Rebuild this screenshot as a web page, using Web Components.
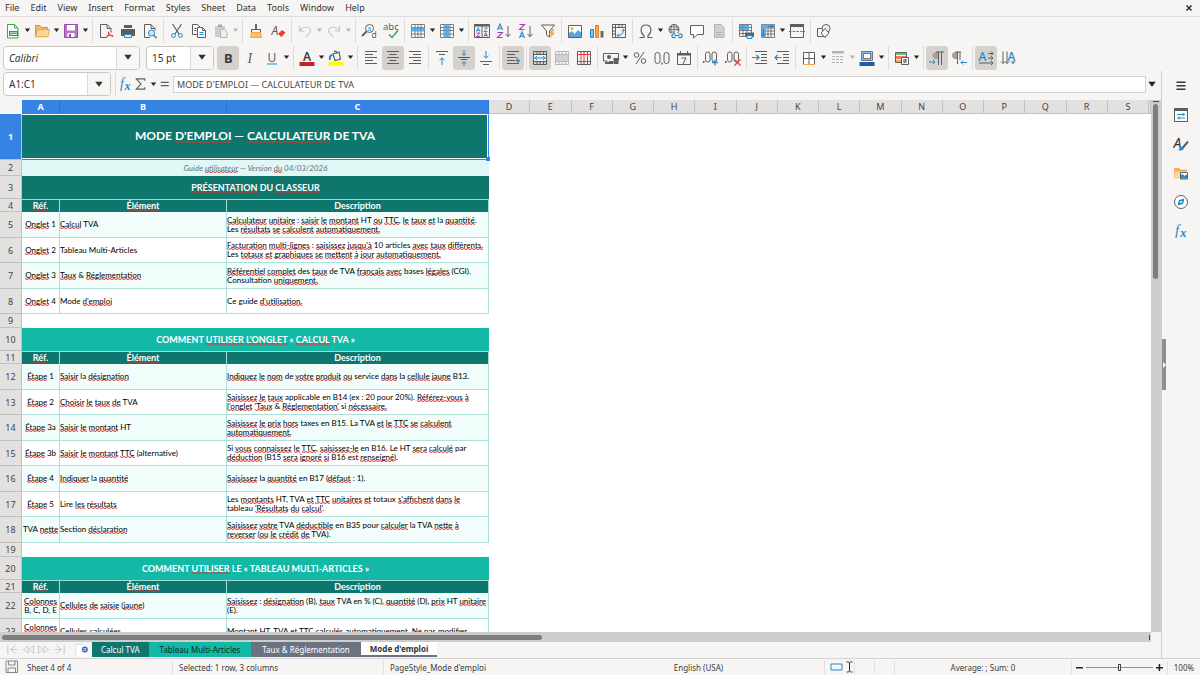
<!DOCTYPE html>
<html lang="fr">
<head>
<meta charset="utf-8">
<title>Calculateur de TVA</title>
<style>
html,body{margin:0;height:100%}
body{font:9px/12px "Noto Sans",sans-serif;color:#3c3c3c;background:#f6f5f4;overflow:hidden}
</style>
</head>
<body>
<calc-app></calc-app>
<script>
const K='#5e5e5e',B='#1e8bcd',R='#ed3d3b',O='#f8a64a';
const line=(d,c=K,w=1)=>`<path d="${d}" fill="none" stroke="${c}" stroke-width="${w}"/>`;
const fill=(d,c=K)=>`<path d="${d}" fill="${c}"/>`;
const glyph=(t,x,y,s,c=K,x2='')=>`<text x="${x}" y="${y}" font-size="${s}" fill="${c}" ${x2}>${t}</text>`;
const grid=fill('M1 1h14v14H1z','#fff')+line('M1.500 1.500h13v13h-13zM1.500 4.500h13M1.500 7.500h13M1.500 11h13M5 1.500v13M8 1.500v13M11 1.500v13',K,.8);
/* every drawing lives on a 16 unit square */
const ICONS={
 new:fill('M2.5 1.5h7l3.5 3.500v10H2.500z','#fff')+line('M2.500 15V1.500h7l3.500 3.500v10zM9.500 1.500V5H13','#3fa64b')+fill('M4 8h9v5H4z','#2f9c3f')+line('M5 9.800h7M5 11.500h7','#fff',.8),
 open:fill('M1 13.500v-11h5l1.500 2h6.500v2','#f3b965')+line('M1.500 13.500v-11h4.500l1.500 2h6v2','#d9933a')+fill('M1.500 13.700l2-7.200h12l-1.700 7.200z','#fdd59a')+line('M1.500 13.700l2-7.200h12l-1.700 7.200z','#e8a548'),
 save:fill('M1 1.500h14v13H1z','#b974cb')+line('M1.500 1.500h13v13h-13z','#9a4bb0')+fill('M4 2h8v5.500H4zM4.500 10h7v4h-7z','#fff')+fill('M6 11h2v3H6z','#9a4bb0'),
 pdf:line('M2.500 1.500h6.500l4 4v4M2.500 1.500v13h6M9 1.500v4h4')+line('M8 14.500c2-1 3-3.500 2.700-6M10.500 9.500c1 3 2 3.800 5 3.700M8.500 14c2-2 4-2 6.500-1.500','#e0322f'),
 print:fill('M1 6h14v7h-3v-2H4v2H1z')+fill('M4 2h8v3H4z')+line('M4.500 11.500h7v3h-7z',B)+fill('M5 12h6v2H5z','#d9f0fc'),
 preview:line('M8 14.500H2.500v-13H9l4 4v2M9 1.500v4h4')+'<circle cx="9.500" cy="10" r="3" fill="#cfe8f8" stroke="#1e8bcd"/>'+line('M11.700 12.200l3 3',B,1.500),
 cut:line('M3.500 1l6.500 10M12.500 1L6 11',K,1.200)+'<circle cx="4.500" cy="12.500" r="2" fill="none" stroke="#1e8bcd"/><circle cx="11.500" cy="12.500" r="2" fill="none" stroke="#1e8bcd"/>',
 copy:line('M6 11.500H1.500v-10h5l3 3M3.500 5.500h2M3.500 7.500h2')+fill('M6.500 4.500h5l3 3v7h-8z','#fff')+line('M6.500 4.500h5l3 3v7h-8zM11.500 4.500v3h3')+line('M8.500 9.500h4M8.500 11.500h4',B),
 paste:fill('M2 3h10v11H2z','#cfcdcb')+fill('M5 1.500h4V4H5z','#a9a7a5')+fill('M7 6h7v9H7z','#f0efee')+line('M7.500 6.500h4l2.500 2.500v5.500H7.500z','#b5b3b1'),
 brush:fill('M7 1h2v5H7z','#6b6b6b')+line('M3.500 9.500v-3h9v3')+fill('M4 9h8.500l1.500 5.500H2z','#fbbd72')+line('M2.500 14.500l1-5h9l1 5z',O),
 clear:glyph('A',1.500,12,12,K,'font-style="italic"')+fill('M8 11l4-4 3.500 2.500-4 4.500z',R),
 undo:line('M2.500 3v5h5M2.500 8c3-5 11-5 11 0 0 3-3 4-5 6','#c9c7c5',1.200),
 redo:line('M13.500 3v5h-5M13.500 8c-3-5-11-5-11 0 0 3 3 4 5 6','#c9c7c5',1.200),
 find:'<circle cx="8.500" cy="5.500" r="4" fill="#fff" stroke="#5e5e5e"/>'+line('M5.500 8.500L1 13',K,1.800)+glyph('a',6.200,8,7,B)+glyph('d',10.500,15,8.500,K),
 spell:glyph('abc',0,7,9.500,K)+line('M6 11.500l3 3 6-7','#35a854',1.500),
 row:grid+fill('M1.500 4.500h13v4h-13z','#5fb0ea')+line('M5 4.500v4M8 4.500v4M11 4.500v4','#3a8fd0',.6),
 col:grid+fill('M5.500 1.500h4.500v13H5.500z','#5fb0ea')+line('M5.500 4.500h4.500M5.500 7.500h4.500M5.500 11h4.500','#3a8fd0',.6),
 sort:line('M.5 1.500h15v13H.5zM8 3v11.500')+fill('M.5 1h15v2.500H.5z')+line('M2.500 8.500l1.700-4 1.700 4M3 7.500h2.500M10 4.800h3.500L10 8.500h3.500',B,.9)+line('M2.500 10h3.500l-3.500 3.500H6','#8e3fa3',.9)+line('M10 13.500l1.700-4 1.700 4M10.500 12.500h2.500','#8e3fa3',.9),
 az:line('M1.500 7L4 1l2.500 6M2.300 5.200h3.400',B,1.100)+line('M1.500 9.500h5l-5 5h5','#a33fb0',1.100)+line('M12 3v10.500M9.500 11l2.500 2.700 2.500-2.700'),
 za:line('M1.500 1.500h5l-5 5h5','#a33fb0',1.100)+line('M1.500 15L4 9l2.500 6M2.300 13.200h3.400',B,1.100)+line('M12 3v10.500M9.500 11l2.500 2.700 2.500-2.700'),
 filter:line('M1.500 2h13L9.500 8v6l-3-2V8z')+fill('M12 6l-3 5h2l-1 4.500 5-6h-2.500l2-3.500z',O),
 image:fill('M1.500 2h13v12.500h-13z','#fff')+fill('M2 14v-4l3-2 2.500 3 3.500-4 3.500 3v4z','#5ba5dc')+line('M1.500 2.500h13v12h-13z')+'<circle cx="5" cy="5.500" r="1.500" fill="#f8a64a"/>',
 chart:fill('M1.500 6h3v8.500h-3z','#83beec')+line('M1.500 6.500h3v8h-3z',B)+fill('M6.500 2h3v12.500h-3z',O)+line('M6.500 2.500h3v12h-3z','#e08020')+fill('M11.500 8h3v6.500h-3z','#696969'),
 pivot:line('M1.500 1.500h13v13h-13zM1.500 4.500h13M4.500 1.500v13M8 1.500v3M11 1.500v3M1.500 8h3M1.500 11h3')+line('M12.500 6.500c0 4-2 6-6 6M10.700 8l1.800-1.800L14.300 8M8 10.500l-2 2 2 2',B),
 omega:line('M1.500 14.500h4.500v-2C2 10 1.800 2 8 2s6 8 2 10.500v2h4.500',K,1.200),
 globe:'<circle cx="7" cy="6.500" r="5" fill="none" stroke="#5e5e5e"/>'+line('M2 6.500h10M3 4h8M3 9h5M7 1.500v9M5 2c-1.500 3-1.500 6 0 8.500M9 2c1 2 1.500 4 1 6',K,.8)+fill('M4 10h12v6H4z','#f6f5f4')+line('M8.500 10.800H6.800a1.900 1.900 0 000 3.800h1.700M11.500 10.800h1.700a1.900 1.900 0 010 3.800h-1.700M7.500 12.700h5',B,1.200),
 comment:fill('M1.500 2.500h13v9H8L4.500 14.500v-3h-3z','#fff')+line('M1.500 2.500h13v9H8.500L4.500 15v-3.500h-3z'),
 footer:fill('M3 1.500h7l3 3v10H3z','#d3d1cf')+line('M3.500 1.500H10l3 3v10H3.500zM5 9.500h6M5 12h6','#b5b3b1'),
 parea:line('M1.500 1.500h12v12h-12zM1.500 4.500h12M1.500 7.500h12M1.500 10.500h12M5 1.500v12M9 1.500v12',K,.8)+fill('M2 2h9v5H2z','#5fb0ea')+line('M2 4.500h9M5 2v5','#3a8fd0',.6)+fill('M7 9.500h9V14H7z','#4d6c80')+fill('M9 12.500h5v3H9z','#d9f0fc')+line('M9 12.500h5v3H9z',B),
 freeze:line('M1.500 1.500h13v13h-13zM1.500 5h13M5 1.500v13M8 5v9.500M11 5v9.500M5 8h9.500M5 11h9.500',K,.8)+fill('M1.500 1.500h13V5H5v9.500H1.500z','#62aee6')+line('M3.300 6v7M8 3.300h5M11.500 2l1.500 1.300L11.500 4.500M2 11.500l1.300 1.500 1.200-1.500','#1f5fa6',.8),
 split:line('M1.500 1.500h13v13h-13z')+fill('M1 1h14v3H1z')+line('M0 8.500h16',B).replace('/>',' stroke-dasharray="2.500 1.200"/>'),
 shapes:line('M1.500 5.500h8v8h-8z')+'<circle cx="10" cy="5.500" r="4" fill="#f6f5f4" stroke="#5e5e5e"/>'+fill('M8.500 6l4 4-4 4-3.500-4z','#f6f5f4')+line('M9 5.500l4 4.500-4 4.500L5 10z'),
 bold:glyph('B',4,12.500,13,'#3b3b3b','font-weight="700" font-family="Noto Sans"'),
 italic:glyph('I',5.500,12.500,14,K,'font-style="italic" font-family="Liberation Serif"'),
 underline:glyph('U',3.500,11.500,12,K)+fill('M3 13.500h10v1H3z',B),
 fontc:glyph('A',4,10.500,12,'#3b3b3b','font-weight="600"')+fill('M.5 12h15v4H.5z','#c9211e'),
 fillc:line('M5 4l6-2 1.500 7-5.500 1.500zM6 2c1-1.500 3-1 3 2',K,1.200)+line('M4.500 5C2 5 1.500 7 2 10',B,2)+fill('M.5 12h15v4H.5z','#ffff00'),
 left:line('M2 1.500h12M2 4.500h8M2 7.500h12M2 10.500h8M2 13.500h12'),
 center:line('M2 1.500h12M4.500 4.500h7M2 7.500h12M4.500 10.500h7M2 13.500h12'),
 right:line('M2 1.500h12M6 4.500h8M2 7.500h12M6 10.500h8M2 13.500h12'),
 top:line('M2 1.500h12M5 4.500h6')+line('M8 15V8M5.500 10.300L8 7.800l2.500 2.500',B),
 middle:line('M2 7.500h12M5 9.500h6')+line('M8 0v5M6 3.500l2 2 2-2M8 16v-4M6 13.500l2-2 2 2',B),
 bottom:line('M2 11.500h12M5 14.500h6')+line('M8 1v7M5.500 5.700L8 8.200l2.500-2.500',B),
 wrap:line('M2 1.500h12M2 4.500h8M2 7.500h6M2 10.500h8M2 13.500h12')+line('M8 7.500h3c2 0 2 2 2 4M11 10l2 2 2-2',B,1.200),
 merge:line('M1.500 1.500h13v13h-13zM1.500 4.500h13M1.500 11.500h13M5 1.500v3M8 1.500v3M11.500 1.500v3M5 11.500v3M8 11.500v3M11.500 11.500v3')+fill('M2 5h12v6H2z','#e9f5fd')+line('M2.500 8h11M5 6L3 8l2 2M11 6l2 2-2 2',B),
 unmerge:fill('M2 5h12v6H2z','#d3d1cf')+line('M1.500 1.500h13v13h-13zM1.500 4.500h13M1.500 11.500h13M5 1.500v3M8 1.500v3M11.500 1.500v3M5 11.500v3M8 11.500v3M11.500 11.500v3','#bab8b6'),
 splitc:line('M1.500 1.500h13v13h-13zM5 1.500v3M8 1.500v3M11.500 1.500v3M5 11.500v3M8 11.500v3M11.500 11.500v3')+line('M1.500 4.500h13M1.500 11.500h13M5 4.500v7M11.500 4.500v7M8 4.500v7',R),
 money:line('M.5 3.500h15v7M.5 3.500v7.500h4')+'<circle cx="6" cy="7" r="2" fill="#5e5e5e"/>'+fill('M6 11h4v3H6zM10.500 8h5v6h-5zM2 12h5v2H2z'),
 percent:'<circle cx="4.500" cy="5" r="2.300" fill="none" stroke="#5e5e5e"/><circle cx="11.500" cy="11" r="2.300" fill="none" stroke="#5e5e5e"/>'+line('M12 2L4 14'),
 number:'<rect x="1" y="2.500" width="5" height="11" rx="2.500" fill="none" stroke="#5e5e5e"/><rect x="10" y="2.500" width="5" height="11" rx="2.500" fill="none" stroke="#5e5e5e"/>'+fill('M7.300 12.500h1.400v2H7.300z'),
 date:line('M1.500 3.500h13v11h-13z')+fill('M1.500 3h13v2.500h-13zM4 1h1v3H4zM11 1h1v3h-1z')+line('M5.500 8h4.500l-3 6'),
 addd:'<rect x="2.500" y="2" width="4.500" height="10" rx="2.200" fill="none" stroke="#5e5e5e"/><rect x="9" y="2" width="4.500" height="10" rx="2.200" fill="none" stroke="#5e5e5e"/>'+fill('M0 11h1.500v2H0z')+line('M12 9.500v6M9 12.500h6',B,1.300),
 deld:'<rect x="2.500" y="2" width="4.500" height="10" rx="2.200" fill="none" stroke="#5e5e5e"/><rect x="9" y="2" width="4.500" height="10" rx="2.200" fill="none" stroke="#5e5e5e"/>'+fill('M0 11h1.500v2H0z')+line('M9.500 9.500l6 6M15.500 9.500l-6 6',R,1.300),
 indent:line('M3 1.500h12M9 4.500h6M9 7.500h6M9 10.500h6M3 13.500h12')+line('M0 7.500h6.500M4.500 5l2.500 2.500L4.500 10',B,1.200),
 outdent:line('M3 1.500h12M9 4.500h6M9 7.500h6M9 10.500h6M3 13.500h12')+line('M7.500 7.500H1M3.500 5L1 7.500 3.500 10',B,1.200),
 border:fill('M2 2h12v12H2z','#fff')+line('M2.500 14.500v-12h11v12M8 2.500v12M2.500 8.500h11')+line('M2 14.500h12',O),
 bstyle:fill('M2 1h12v2.500H2z','#b5b3b1')+line('M2 6.500h12M2 9.500h12M2 12.500h12','#b5b3b1').replace('/>',' stroke-dasharray="3 1"/>'),
 bcolor:fill('M2.500 1.500h11v9h-11z','#83beec')+fill('M4.500 3.500h7v5h-7z','#fff')+line('M2.500 1.500h11v9h-11zM4.500 3.500h7v5h-7z',K,.8)+fill('M.5 12h15v4H.5z','#1f5fa6'),
 cond:line('M1.500 2.500h11v10h-11z')+fill('M2 3h10v2H2z','#63c177')+fill('M2 6h10v3H2z','#ef7a6c')+fill('M2 10h5v2H2z','#f8a64a')+fill('M7 7h8v8H7z','#fff')+line('M7.500 7.500h7v7h-7zM9 10h4M9 12h4M12 8.800l-2 4.500'),
 ltr:fill('M9 2H7a3.300 3.300 0 000 7h2z','#a3a19f')+line('M9.500 15V2M12.500 15V2M7 2h8')+line('M0 12h6M4 10l2 2-2 2',B),
 rtl:fill('M6 2H4.500a3.300 3.300 0 000 7H6z','#a3a19f')+line('M6.500 14V2M9 10V2M4.500 2H10')+line('M16 12.500h-6M12 10.500l-2 2 2 2',B),
 horiz:glyph('A',.5,10.500,12,B,'font-weight="500"')+line('M10 3.500h5M13 1.500l2 2-2 2M10 8h5M13 6l2 2-2 2M1 13h14M13 11l2 2-2 2'),
 vert:glyph('A',7.500,10.500,12,B,'font-weight="500"')+line('M3 1.500v12M1 11.500l2 2 2-2M7 1.500v12M5 11.500l2 2 2-2M13 10.500v3M11 11.500l2 2 2-2'),
 fx:glyph('f',2,12,15,B,'font-style="italic" font-family="Liberation Serif"')+glyph('x',7,14,13,B,'font-style="italic" font-weight="700" font-family="Liberation Serif"'),
 sum:line('M12.500 4.500v-2h-9l5 5.500-5 5.500h9v-2',K,1.200),
 equal:fill('M4 5.500h8.500v1.500H4zM4 9h8.500v1.500H4z'),
 burger:fill('M3.500 3.500h9V5h-9zM3.500 7h9v1.500h-9zM3.500 10.500h9V12h-9z','#333'),
 props:fill('M1.500 1.500h13v13h-13z','#fff')+line('M1.500 1.500h13v13h-13z')+fill('M1 1h14v3H1z')+line('M4 7.500h8M4 11h8M10 6v3M6 9.500v3',B),
 styles:glyph('A',.5,12,14,'#333','font-style="italic"')+line('M15 5.500l-5 6',K,2)+fill('M9.500 10.500c-3 0-2 3-5 3.500 3 1.500 6.500 0 6.500-2z',B),
 gallery:fill('M1 13V3h5l1.500 1.500H14V13z','#f5ae5a')+fill('M1.500 13.500v-7h13v7z','#fdd59a')+fill('M7 7h8v7H7z','#fff')+fill('M7.500 13.500v-3l2-1.500 2 2 1.500-1.500 2 2v2z',B)+line('M7.500 7.500h7v6.500h-7z'),
 compass:'<circle cx="8" cy="8" r="6.500" fill="#fff" stroke="#5e5e5e"/>'+fill('M11.500 4.500L10 10l-5.500 1.500L6 6z',B)+'<circle cx="8" cy="8" r="1" fill="#fff"/>',
 disk:line('M2 2h11.500v11.500H2zM4.500 2v4h6.500V2M4 13.500V9h7.500v4.500','#8a8886'),
 close:line('M5.500 5.500l5 5M10.500 5.500l-5 5','#333',1.600),
 first:line('M3.500 3v10M12 3.500L7 8l5 4.500M6 8h8','#c9c7c5'),
 prev:line('M8 4L3 8l5 4zM14 4L9 8l5 4z','#c9c7c5'),
 next:line('M2 4l5 4-5 4zM8 4l5 4-5 4z','#c9c7c5'),
 last:line('M12.500 3v10M4 3.500L9 8l-5 4.500M10 8H2','#c9c7c5'),
 addsheet:fill('M1 2h9l4 3.500v10H1z','#fff')+line('M1.500 15V2.500H10','#dddbd9')+'<circle cx="11" cy="8" r="2.500" fill="none" stroke="#3a62b0" stroke-width="1.300"/>'+line('M11 5v6M8 8h6','#3a62b0',.7),
 selmode:line('M1 5h11v6H1z',B)
};
const tpl=(html)=>{const t=document.createElement('template');t.innerHTML=html;return t};
const define=(name,html,setup)=>{
  const t=tpl(html);
  customElements.define(name,class extends HTMLElement{
    constructor(){super();this.attachShadow({mode:'open'})}
    connectedCallback(){
      if(this.ready)return;this.ready=true;
      this.shadowRoot.append(t.content.cloneNode(true));
      if(setup)setup(this,this.shadowRoot);
    }
  });
};

define('ui-icon',`<style>:host{display:block;width:16px;height:16px}svg{display:block;width:100%;height:100%;font-family:"Noto Sans",sans-serif}</style><svg viewBox="0 0 16 16" aria-hidden="true"></svg>`,
 (el,r)=>{r.querySelector('svg').innerHTML=ICONS[el.getAttribute('name')]||''});

define('ui-arrow',`<style>:host{display:block;width:7px}svg{display:block;width:100%}</style><svg viewBox="0 0 8 5" aria-hidden="true"><path d="M1 .5h6L4 4.500z" fill="currentColor"/></svg>`);

/* toolbar button; "menu" adds the drop-down arrow */
define('tool-button',`<style>
:host{display:flex;color:#222}
button{font:inherit;border:0;background:none;padding:0;margin:0;display:grid;place-items:center;height:24px;border-radius:3px;color:inherit}
.main{width:22px}.more{width:7px}
:host([pressed]) .main{background:#d5d1cd}
:host([disabled]) .more{color:#bab8b6}
ui-arrow{width:7px}
</style><button class="main" type="button"></button>`,
 (el,r)=>{
  const n=el.getAttribute('name');
  const b=r.querySelector('button');b.setAttribute('aria-label',n);
  if(el.hasAttribute('pressed'))b.setAttribute('aria-pressed','true');
  b.innerHTML=`<ui-icon name="${n}"></ui-icon>`;
  if(el.hasAttribute('menu')){
    const m=document.createElement('button');m.className='more';m.type='button';m.setAttribute('aria-label',n+' menu');
    m.append(document.createElement('ui-arrow'));r.append(m);
  }
 });

define('tool-sep',`<style>:host{display:flex;width:5px;height:24px;justify-content:center}:host([wide]){width:6px}i{width:1px;background:#dedcda}</style><i></i>`);

define('combo-box',`<style>
:host{display:grid;grid-template-columns:1fr 23px;height:24px;box-sizing:border-box;border:1px solid #cdc7c2;border-radius:4px;background:#fff;overflow:hidden}
select,input{grid-area:1/1/2/3;appearance:none;border:0;background:none;outline:0;font:inherit;font-size:10px;color:#2e3436;padding:0 0 0 5px;margin:0;min-width:0}
span{grid-area:1/2/2/3;display:grid;place-items:center;background:#f8f7f6;border-left:1px solid #dcd9d6;color:#333;pointer-events:none}
ui-arrow{width:10px}
</style><span><ui-arrow></ui-arrow></span>`,
 (el,r)=>{
  let c;
  if(el.hasAttribute('editable')){c=document.createElement('input');c.value=el.getAttribute('value')}
  else{c=document.createElement('select');c.append(new Option(el.getAttribute('value')))}
  c.setAttribute('aria-label',el.getAttribute('label'));r.insertBefore(c,r.querySelector('span'));
 });

define('menu-bar',`<style>
:host{display:flex;justify-content:space-between;height:16px;border-bottom:1px solid #dfdddb;color:#333}
nav{display:flex;gap:1px}
button{font:inherit;color:inherit;background:none;border:0;margin:0;padding:0 5px}
.x{padding:0 3px 0 0}
</style><nav></nav><button class="x" type="button" aria-label="Close"><ui-icon name="close"></ui-icon></button>`,
 (el,r)=>{r.querySelector('nav').innerHTML='File,Edit,View,Insert,Format,Styles,Sheet,Data,Tools,Window,Help'.split(',').map(t=>`<button type="button">${t}</button>`).join('')});

/* spec: "name" button, "name+" with menu, "!" pressed, "~" disabled, "|" separator, "||" separator after a menu */
define('tool-bar',`<style>:host{display:flex;align-items:center;height:27px;padding-left:2px}#b{display:flex;align-items:center}</style><slot></slot><div id="b" role="toolbar"></div>`,
 (el,r)=>{r.querySelector('#b').innerHTML=el.getAttribute('items').split(' ').map(s=>s==='|'?'<tool-sep></tool-sep>':s==='||'?'<tool-sep wide></tool-sep>':
  `<tool-button name="${s.replace(/[+!~]/g,'')}"${s.includes('+')?' menu':''}${s.includes('!')?' pressed':''}${s.includes('~')?' disabled':''}></tool-button>`).join('')});

define('formula-bar',`<style>
:host{display:flex;align-items:center;height:29px;padding:0 4px 3px 3px;box-sizing:border-box}
combo-box{width:108px}
.t{display:flex;align-items:center;padding:0 2px}
input{flex:1;min-width:0;height:17px;box-sizing:border-box;border:1px solid #d5d2cf;background:#fff;font:inherit;color:#444;padding:0 3px;margin:0 1px;outline:0}
ui-arrow{width:7px;color:#222}
.e{width:10px}
ui-icon{width:15px}
</style><combo-box editable value="A1:C1" label="Name Box"></combo-box><div class="t"><tool-sep></tool-sep><ui-icon name="fx"></ui-icon><ui-icon name="sum"></ui-icon></div><ui-arrow></ui-arrow><ui-icon name="equal"></ui-icon><input aria-label="Input line" value="MODE D'EMPLOI — CALCULATEUR DE TVA"><ui-arrow class="e"></ui-arrow>`);

/* text between square brackets is flagged by the spell checker, "|" starts a new line */
const ROWS=[
 ['title',"MODE [D'EMPLOI] — [CALCULATEUR] DE TVA"],
 ['note','Guide [utilisateur] — Version [du] 04/03/2026'],
 ['sec dark','[PRÉSENTATION] DU [CLASSEUR]'],
 ['head','[Réf.]','[Élément]','Description'],
 ['alt a','[Onglet] 1','[Calcul] TVA','[Calculateur] [unitaire] : [saisir] [le] [montant] HT [ou] [TTC], [le] [taux] [et] la [quantité].|Les [résultats] [se] [calculent] [automatiquement.]'],
 ['b','[Onglet] 2','Tableau Multi-Articles',"[Facturation] [multi-lignes] : [saisissez] [jusqu'à] 10 articles [avec] [taux] [différents.]|Les [totaux] [et] [graphiques] [se] [mettent] [à] [jour] [automatiquement.]"],
 ['alt a','[Onglet] 3','[Taux] & [Réglementation]','[Référentiel] [complet] des [taux] de TVA [français] [avec] bases [légales] (CGI).|Consultation [uniquement.]'],
 ['b','[Onglet] 4',"Mode [d'emploi]","Ce guide [d'utilisation.]"],
 ['gap'],
 ['sec',"COMMENT [UTILISER] [L'ONGLET] « [CALCUL] TVA »"],
 ['head','[Réf.]','[Élément]','Description'],
 ['alt a','[Étape] 1','[Saisir] la [désignation]','[Indiquez] [le] [nom] de [votre] [produit] [ou] service [dans] la [cellule] [jaune] B13.'],
 ['b','[Étape] 2','[Choisir] [le] [taux] [de] TVA',"[Saisissez] [le] [taux] applicable en B14 (ex : 20 pour 20%). [Référez-vous] [à]|[l'onglet] ['Taux] & [Réglementation'] si [nécessaire.]"],
 ['alt a','[Étape] 3a','[Saisir] [le] [montant] HT','[Saisissez] [le] [prix] [hors] taxes en B15. La TVA [et] [le] [TTC] [se] [calculent]|[automatiquement.]'],
 ['b','[Étape] 3b','[Saisir] [le] [montant] [TTC] (alternative)','Si [vous] [connaissez] [le] [TTC], [saisissez-le] en B16. Le HT [sera] [calculé] par|[déduction] (B15 [sera] [ignoré] [si] B16 est [renseigné]).'],
 ['alt a','[Étape] 4','[Indiquer] la [quantité]','[Saisissez] la [quantité] en B17 ([défaut] : 1).'],
 ['b','[Étape] 5','Lire [les] [résultats]',"Les [montants] HT, TVA [et] [TTC] [unitaires] [et] totaux [s'affichent] [dans] [le]|tableau ['Résultats] [du] [calcul']."],
 ['alt a','TVA [nette]','Section [déclaration]','[Saisissez] [votre] TVA [déductible] en B35 pour [calculer] la TVA [nette] [à]|[reverser] ([ou] [le] [crédit] [de] TVA).'],
 ['gap'],
 ['sec','COMMENT [UTILISER] LE « TABLEAU MULTI-ARTICLES »'],
 ['head','[Réf.]','[Élément]','Description'],
 ['alt a','[Colonnes]|B, C, D, E','[Cellules] [de] [saisie] ([jaune])','[Saisissez] : [désignation] (B), [taux] TVA en % (C), [quantité] (D), [prix] HT [unitaire]|(E).'],
 ['b last','[Colonnes]','[Cellules] [calculées]','[Montant] HT, TVA [et] [TTC] [calculés] [automatiquement]. Ne pas [modifier]']
];
define('sheet-grid',`<style>
:host{display:block;overflow:hidden;background:#fff;min-height:0}
table{width:100%;border-collapse:separate;border-spacing:0;table-layout:fixed;font:8px/9px Lato,sans-serif;color:#000}
.rh{width:22px}.ca{width:38px}.cb{width:167px}.cc{width:262px}.end{width:2px}
th,td{box-sizing:border-box;padding:0;font-weight:inherit;white-space:nowrap}
thead th{height:14px;font:9px/12px "Noto Sans",sans-serif;background:#e2e1e0;color:#444;border-right:1px solid #c4c2c0;border-bottom:1px solid #c4c2c0}
thead th.sel{background:#3584e4;color:#fff;font-weight:700;border-color:#2f74c8 #2f74c8 #3584e4}
thead th:first-child{background:#f6f5f4;border-color:#f6f5f4}
tbody th{font:9px/11px "Noto Sans",sans-serif;background:#e2e1e0;color:#444;border-right:1px solid #c4c2c0;border-bottom:1px solid #c4c2c0}
tr.title{height:46px}tr.note{height:16px}tr.sec{height:23px}tr.head{height:13px}tr.a{height:26px}tr.b{height:25px}tr.gap{height:14px}
.c{text-align:center}
tbody .title th{background:#3584e4;color:#fff;font-weight:700}
.title .c{position:relative;background:#0f766e;color:#fff;font-size:12px;font-weight:700;border-top:1px solid #fff;border-bottom:1px solid #3584e4;border-right:1px solid #3584e4;box-shadow:inset -1px -1px #fff;padding-bottom:3px}
.title .c::after{content:"";position:absolute;right:-2px;bottom:-2px;width:4px;height:4px;background:#3584e4}
.note .c{background:#e0f7f5;color:#6b7280;font-style:italic}
.sec .c{background:#14b8a6;color:#fff;font-size:9px;font-weight:700}
.sec.dark .c{background:#0f766e}
.head td.c{background:#0f766e;color:#fff;font-size:9px;font-weight:700;border-top:1px solid #9fdcd4;border-right:1px solid #9fdcd4;padding-bottom:2px}
.a .v,.b .v{border-right:1px solid #aee0d9;border-bottom:1px solid #aee0d9}
.last .v:first-of-type{vertical-align:top;padding-top:4px}
.alt .v{background:#f0fdfa}
/* spell checker squiggle */
s{text-decoration:none;background:url("data:image/svg+xml,%3Csvg xmlns='http://www.w3.org/2000/svg' width='4' height='2'%3E%3Cpath d='M0 .5l2 1 2-1' fill='none' stroke='%23e0302a'/%3E%3C/svg%3E") 0 100%/4px 2px repeat-x}
</style><table><colgroup><col class="rh"><col class="ca"><col class="cb"><col class="cc"><col span="16"><col class="end"></colgroup><thead><tr></tr></thead><tbody></tbody></table>`,
 (el,r)=>{
  const sp=t=>t.replace(/&/g,'&amp;').replace(/\[(.*?)\]/g,'<s>$1</s>').replace(/\|/g,'<br>');
  r.querySelector('thead tr').innerHTML='<th></th>'+[...'ABCDEFGHIJKLMNOPQRS'].map((c,i)=>`<th scope="col"${i<3?' class="sel"':''}>${c}</th>`).join('')+'<th></th>';
  r.querySelector('tbody').innerHTML=ROWS.map(([k,...v],i)=>{
   const cells=v.length===0?'<td colspan="3"></td>':v.length===1?`<td class="c" colspan="3">${sp(v[0])}</td>`:
    v.map((t,j)=>`<td class="v${j===0||k==='head'?' c':''}">${sp(t)}</td>`).join('');
   return `<tr class="${k}"><th scope="row">${i+1}</th>${cells}<td colspan="17"></td></tr>`}).join('');
 });

define('scroll-bar',`<style>
:host{display:flex;background:#cdcdcd;box-sizing:border-box}
:host([dir-y]){flex-direction:column;width:10px;padding:1px 2px 0}
:host([dir-x]){height:10px;padding:3px 1px 2px 2px;justify-content:space-between}
i{display:block;background:#7e7e7e;border-radius:3px}
b{display:block;background:#444}
:host([dir-y]) i{width:5px;height:33%;margin-top:2px}:host([dir-y]) b{height:1px;order:-1}
:host([dir-x]) i{width:47%;height:5px}:host([dir-x]) b{width:1px}
</style><i></i><b></b>`);

define('sheet-tabs',`<style>
:host{display:flex;height:16px;padding-left:4px}
.nav{display:flex}
button{font:inherit;font-size:8px;border:0;margin:0;height:15px;padding:0 9px;color:#fff;background:var(--c)}
.nav button{padding:0;background:none}
.nav ui-icon{width:16px;height:15px}
.nav .add{margin:0 2px 0 6px}
.w{padding:0 11px}
.on{font-weight:700;background:#fff;color:#333;border-bottom:2px solid #6b7280}
.d{color:#0b2a26}
</style><div class="nav"><button aria-label="First"><ui-icon name="first"></ui-icon></button><button aria-label="Previous"><ui-icon name="prev"></ui-icon></button><button aria-label="Next"><ui-icon name="next"></ui-icon></button><button aria-label="Last"><ui-icon name="last"></ui-icon></button><button class="add" aria-label="Add"><ui-icon name="addsheet"></ui-icon></button></div>
<button style="--c:#0f766e">Calcul TVA</button><button class="d w" style="--c:#14b8a6">Tableau Multi-Articles</button><button class="w" style="--c:#6b7280">Taux &amp; Réglementation</button><button class="on">Mode d'emploi</button>`);

define('side-bar',`<style>
:host{display:flex;width:39px;box-sizing:border-box;border-left:1px solid #d0cecc;align-items:center}
.h{width:4px;height:51px;background:#8f8f8f;display:grid;place-items:center;padding:0;border:0;margin:0}
.h svg{width:4px;height:6px;display:block}
.l{align-self:flex-start;flex:1;display:flex;flex-direction:column;align-items:center;gap:13px;padding:7px 4px 0 0}
.l button{border:0;background:none;padding:0;margin:0}
</style><button class="h" aria-label="Hide"><svg viewBox="0 0 4 6"><path d="M1 0l3 3-3 3z" fill="#fff"/></svg></button><div class="l"></div>`,
 (el,r)=>{r.querySelector('.l').innerHTML=['burger','props','styles','gallery','compass','fx'].map(n=>`<button type="button" aria-label="${n}"><ui-icon name="${n}"></ui-icon></button>`).join('')});

define('status-bar',`<style>
:host{display:grid;grid-template-columns:24px 148fr 211fr 187fr 254fr 30px 20px 20px 177fr 96px 33px;height:17px;box-sizing:border-box;border-top:1px solid #d5d3d1;align-items:center;font-size:8px}
span{display:block;line-height:13px;padding-left:6px;border-left:1px solid #e2e0de;height:13px;white-space:nowrap}
span.n{border-left-color:transparent;padding-left:2px}
.c{text-align:center;padding:0}
.s{display:flex;align-items:center;padding:0 3px;justify-content:space-between}
.s button{border:0;background:none;padding:0;margin:0;width:9px;height:9px}
.s svg{display:block}
ui-icon{margin:0 auto}
input{appearance:none;flex:1;min-width:0;margin:0 2px;height:9px;background:linear-gradient(#8f8f8f,#8f8f8f) center/100% 1px no-repeat}
input::-webkit-slider-thumb{appearance:none;width:3px;height:7px;background:#f6f5f4;border:1px solid #444;box-sizing:border-box}
.i{display:flex;padding:0 0 0 5px;align-items:center}
.i ui-icon{margin:0}
</style><ui-icon name="disk"></ui-icon><span class="n">Sheet 4 of 4</span><span>Selected: 1 row, 3 columns</span><span>PageStyle_Mode d'emploi</span><span class="c n">English (USA)</span><span class="i"><ui-icon name="selmode"></ui-icon><svg width="7" height="12" viewBox="0 0 7 12"><path d="M.5 1C2 .8 3 1 3.500 2 4 1 5 .8 6.500 1M3.500 2v8M.5 11c1.500.2 2.500 0 3-1 .5 1 1.500 1.200 3 1" fill="none" stroke="#333"/></svg></span><span></span><span></span><span class="c">Average: ; Sum: 0</span><span class="s"><button aria-label="Zoom out"><svg width="9" height="9"><path d="M1 4h7v1.500H1z" fill="#222"/></svg></button><input type="range" aria-label="Zoom"><button aria-label="Zoom in"><svg width="9" height="9"><path d="M1 4h7v1.500H1zM3.700 1h1.500v7H3.700z" fill="#222"/></svg></button></span><span class="c">100%</span>`);

define('calc-app',`<style>
:host{display:flex;flex-direction:column;height:100vh}
.mid{flex:1;display:flex;min-height:0}
.main{flex:1;display:flex;flex-direction:column;min-width:0}
.view{flex:1;display:flex;min-height:0}
sheet-grid{flex:1;min-width:0}
scroll-bar[dir-x]{margin-right:10px}
.f{width:137px;font-style:italic;margin:0 6px 0 1px}
.z{width:68px;margin-right:3px}
</style><menu-bar></menu-bar>
<tool-bar items="new+ open+ save+ || pdf print preview | cut copy paste+~ || brush clear | undo+~ redo+~ || find spell | row+ col+ || sort az za filter | image chart pivot | omega+ globe comment footer | parea freeze+ split | shapes"></tool-bar>
<tool-bar items="bold! italic underline+ || fontc+ fillc+ || left center! right | top middle! bottom | wrap! | merge! unmerge splitc | money+ percent number date | addd deld | indent outdent | border+ bstyle+~ bcolor+ || cond+ || ltr! rtl | horiz! vert"><combo-box class="f" value="Calibri" label="Font name"></combo-box><combo-box class="z" value="15 pt" label="Font size"></combo-box></tool-bar>
<div class="mid"><div class="main"><formula-bar></formula-bar><div class="view"><sheet-grid></sheet-grid><scroll-bar dir-y></scroll-bar></div><scroll-bar dir-x></scroll-bar><sheet-tabs></sheet-tabs></div><side-bar></side-bar></div>
<status-bar></status-bar>`);
</script>
</body>
</html>
